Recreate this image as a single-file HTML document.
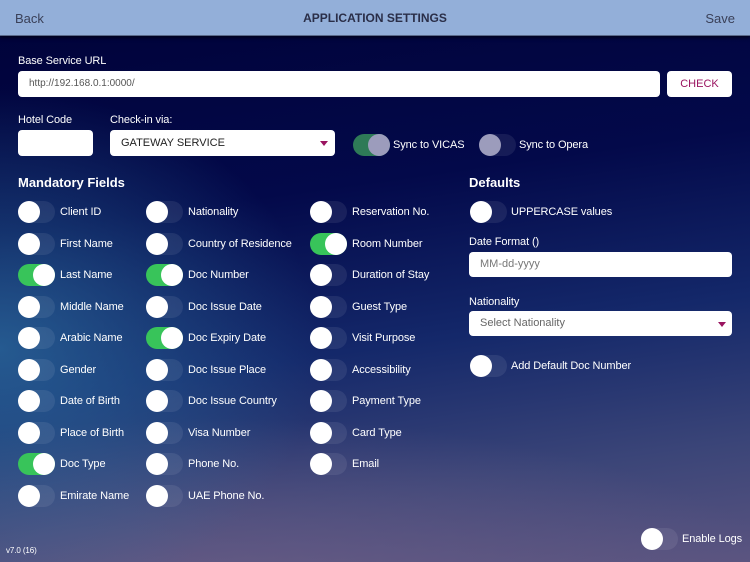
<!DOCTYPE html>
<html><head><meta charset="utf-8"><style>
*{margin:0;padding:0;box-sizing:border-box}
body{width:750px;height:562px;overflow:hidden;font-family:"Liberation Sans",sans-serif;position:relative;
background:
radial-gradient(ellipse 320px 260px at 0% 62%, rgba(45,110,160,0.75), rgba(45,110,160,0) 100%),
radial-gradient(ellipse 600px 200px at 30% 110%, rgba(110,95,135,0.9), rgba(110,95,135,0) 100%),
linear-gradient(172deg,#000238 0%,#03094a 35%,#14286a 60%,#3b4578 82%,#5a5480 100%);}
.hdr{position:absolute;left:0;top:0;width:750px;height:36px;background:#93afd9;border-bottom:1px solid #5a6a8a;box-shadow:0 2px 3px rgba(0,0,0,.5)}
.hdr span{position:absolute;top:11px;font-size:13px;color:#3a4058}
.t{position:absolute;color:#fff;font-size:11px;white-space:nowrap;letter-spacing:-0.1px}
.h{position:absolute;color:#fff;font-size:13px;font-weight:bold}
.box{position:absolute;background:#fff;border-radius:4px}
.tg{position:absolute;width:37px;height:22px;border-radius:11px;background:rgba(255,255,255,0.08)}
.tg::after{content:"";position:absolute;left:0;top:0;width:22px;height:22px;border-radius:50%;background:#fff}
.tg.on{background:#38c45a}
.tg.on::after{left:15px}
.tg.vic{background:#2e7a57}
.tg.vic::after{left:15px;background:#9c9cbc}
.tg.op::after{background:#9c9cbc}
.tri{position:absolute;width:0;height:0;border-left:4px solid transparent;border-right:4px solid transparent;border-top:5px solid #9a1460}
</style></head><body>
<div class="hdr"><span style="left:15px">Back</span><span style="left:0;width:750px;text-align:center;font-weight:bold;font-size:12px;color:#2a2e48">APPLICATION SETTINGS</span><span style="right:15px">Save</span></div>

<div class="t" style="left:18px;top:55px">Base Service URL</div>
<div class="box" style="left:18px;top:71px;width:642px;height:26px"><span style="position:absolute;left:11px;top:7px;font-size:10px;color:#555">http://192.168.0.1:0000/</span></div>
<div class="box" style="left:667px;top:71px;width:65px;height:26px;text-align:center;line-height:26px;font-size:11px;color:#9a1460">CHECK</div>

<div class="t" style="left:18px;top:114px">Hotel Code</div>
<div class="box" style="left:18px;top:130px;width:75px;height:26px"></div>
<div class="t" style="left:110px;top:114px">Check-in via:</div>
<div class="box" style="left:110px;top:130px;width:225px;height:26px"><span style="position:absolute;left:11px;top:7px;font-size:11px;color:#222">GATEWAY SERVICE</span></div>
<div class="tri" style="left:320px;top:141px"></div>

<div class="tg vic" style="left:353px;top:134px"></div>
<div class="t" style="left:393px;top:139px">Sync to VICAS</div>
<div class="tg op" style="left:479px;top:134px"></div>
<div class="t" style="left:519px;top:139px">Sync to Opera</div>

<div class="h" style="left:18px;top:175px">Mandatory Fields</div>
<div class="h" style="left:469px;top:175px">Defaults</div>

<div class="tg" style="left:18px;top:201px"></div><div class="t" style="left:60px;top:206px">Client ID</div>
<div class="tg" style="left:18px;top:233px"></div><div class="t" style="left:60px;top:238px">First Name</div>
<div class="tg on" style="left:18px;top:264px"></div><div class="t" style="left:60px;top:269px">Last Name</div>
<div class="tg" style="left:18px;top:296px"></div><div class="t" style="left:60px;top:301px">Middle Name</div>
<div class="tg" style="left:18px;top:327px"></div><div class="t" style="left:60px;top:332px">Arabic Name</div>
<div class="tg" style="left:18px;top:359px"></div><div class="t" style="left:60px;top:364px">Gender</div>
<div class="tg" style="left:18px;top:390px"></div><div class="t" style="left:60px;top:395px">Date of Birth</div>
<div class="tg" style="left:18px;top:422px"></div><div class="t" style="left:60px;top:427px">Place of Birth</div>
<div class="tg on" style="left:18px;top:453px"></div><div class="t" style="left:60px;top:458px">Doc Type</div>
<div class="tg" style="left:18px;top:485px"></div><div class="t" style="left:60px;top:490px">Emirate Name</div>

<div class="tg" style="left:146px;top:201px"></div><div class="t" style="left:188px;top:206px">Nationality</div>
<div class="tg" style="left:146px;top:233px"></div><div class="t" style="left:188px;top:238px">Country of Residence</div>
<div class="tg on" style="left:146px;top:264px"></div><div class="t" style="left:188px;top:269px">Doc Number</div>
<div class="tg" style="left:146px;top:296px"></div><div class="t" style="left:188px;top:301px">Doc Issue Date</div>
<div class="tg on" style="left:146px;top:327px"></div><div class="t" style="left:188px;top:332px">Doc Expiry Date</div>
<div class="tg" style="left:146px;top:359px"></div><div class="t" style="left:188px;top:364px">Doc Issue Place</div>
<div class="tg" style="left:146px;top:390px"></div><div class="t" style="left:188px;top:395px">Doc Issue Country</div>
<div class="tg" style="left:146px;top:422px"></div><div class="t" style="left:188px;top:427px">Visa Number</div>
<div class="tg" style="left:146px;top:453px"></div><div class="t" style="left:188px;top:458px">Phone No.</div>
<div class="tg" style="left:146px;top:485px"></div><div class="t" style="left:188px;top:490px">UAE Phone No.</div>

<div class="tg" style="left:310px;top:201px"></div><div class="t" style="left:352px;top:206px">Reservation No.</div>
<div class="tg on" style="left:310px;top:233px"></div><div class="t" style="left:352px;top:238px">Room Number</div>
<div class="tg" style="left:310px;top:264px"></div><div class="t" style="left:352px;top:269px">Duration of Stay</div>
<div class="tg" style="left:310px;top:296px"></div><div class="t" style="left:352px;top:301px">Guest Type</div>
<div class="tg" style="left:310px;top:327px"></div><div class="t" style="left:352px;top:332px">Visit Purpose</div>
<div class="tg" style="left:310px;top:359px"></div><div class="t" style="left:352px;top:364px">Accessibility</div>
<div class="tg" style="left:310px;top:390px"></div><div class="t" style="left:352px;top:395px">Payment Type</div>
<div class="tg" style="left:310px;top:422px"></div><div class="t" style="left:352px;top:427px">Card Type</div>
<div class="tg" style="left:310px;top:453px"></div><div class="t" style="left:352px;top:458px">Email</div>

<div class="tg" style="left:470px;top:201px"></div><div class="t" style="left:511px;top:206px">UPPERCASE values</div>
<div class="t" style="left:469px;top:236px">Date Format ()</div>
<div class="box" style="left:469px;top:252px;width:263px;height:25px"><span style="position:absolute;left:11px;top:6px;font-size:11px;color:#777">MM-dd-yyyy</span></div>
<div class="t" style="left:469px;top:296px">Nationality</div>
<div class="box" style="left:469px;top:311px;width:263px;height:25px"><span style="position:absolute;left:11px;top:6px;font-size:11px;color:#666">Select Nationality</span></div>
<div class="tri" style="left:718px;top:322px"></div>
<div class="tg" style="left:470px;top:355px"></div><div class="t" style="left:511px;top:360px">Add Default Doc Number</div>

<div class="tg" style="left:641px;top:528px"></div><div class="t" style="left:682px;top:533px">Enable Logs</div>
<div class="t" style="left:6px;top:546px;font-size:8px">v7.0 (16)</div>
</body></html>
